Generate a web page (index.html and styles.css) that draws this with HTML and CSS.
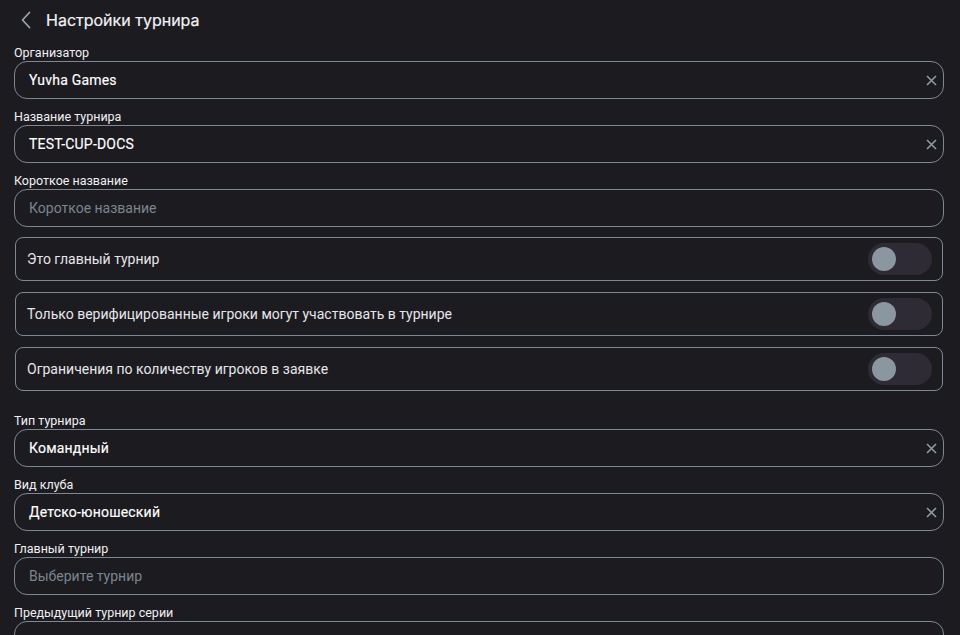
FILE: index.html
```html
<!DOCTYPE html>
<html lang="ru">
<head>
<meta charset="utf-8">
<link rel="stylesheet" href="styles.css">
</head>
<body>
<div class="page">
  <header class="header">
    <span class="back">
      <svg width="12" height="18" viewBox="0 0 12 18"><path d="M9.5 1.5 L2.5 9 L9.5 16.5" fill="none" stroke="#9aa3ab" stroke-width="1.8" stroke-linecap="round" stroke-linejoin="round"/></svg>
    </span>
    <h1 class="title">Настройки турнира</h1>
  </header>

  <div class="field">
    <label class="label">Организатор</label>
    <div class="input"><span class="value">Yuvha Games</span><span class="clear"><svg width="11" height="11" viewBox="0 0 11 11"><path d="M1 1 L10 10 M10 1 L1 10" stroke="#8e9aa4" stroke-width="1.6"/></svg></span></div>
  </div>
  <div class="field">
    <label class="label">Название турнира</label>
    <div class="input"><span class="value">TEST-CUP-DOCS</span><span class="clear"><svg width="11" height="11" viewBox="0 0 11 11"><path d="M1 1 L10 10 M10 1 L1 10" stroke="#8e9aa4" stroke-width="1.6"/></svg></span></div>
  </div>
  <div class="field">
    <label class="label">Короткое название</label>
    <div class="input"><span class="placeholder">Короткое название</span></div>
  </div>

  <div class="toggles">
    <div class="toggle-row"><span>Это главный турнир</span><span class="switch"><span class="knob"></span></span></div>
    <div class="toggle-row"><span>Только верифицированные игроки могут участвовать в турнире</span><span class="switch"><span class="knob"></span></span></div>
    <div class="toggle-row"><span>Ограничения по количеству игроков в заявке</span><span class="switch"><span class="knob"></span></span></div>
  </div>

  <div class="field">
    <label class="label">Тип турнира</label>
    <div class="input"><span class="value">Командный</span><span class="clear"><svg width="11" height="11" viewBox="0 0 11 11"><path d="M1 1 L10 10 M10 1 L1 10" stroke="#8e9aa4" stroke-width="1.6"/></svg></span></div>
  </div>
  <div class="field">
    <label class="label">Вид клуба</label>
    <div class="input"><span class="value">Детско-юношеский</span><span class="clear"><svg width="11" height="11" viewBox="0 0 11 11"><path d="M1 1 L10 10 M10 1 L1 10" stroke="#8e9aa4" stroke-width="1.6"/></svg></span></div>
  </div>
  <div class="field">
    <label class="label">Главный турнир</label>
    <div class="input"><span class="placeholder">Выберите турнир</span></div>
  </div>
  <div class="field">
    <label class="label">Предыдущий турнир серии</label>
    <div class="input"></div>
  </div>
</div>
</body>
</html>
```
FILE: styles.css
```css
html, body {
  margin: 0;
  padding: 0;
  background: #1c1c20;
  height: 100%;
  overflow: hidden;
}
body {
  font-family: Roboto, "Noto Sans", sans-serif;
  color: #ffffff;
}
.page {
  padding: 0 16px 0 14px;
}
.header {
  height: 40px;
  display: flex;
  align-items: center;
  gap: 14px;
  padding-left: 6px;
  margin-bottom: 5px;
}
.back {
  display: flex;
  width: 12px;
  height: 18px;
}
.title {
  margin: 0;
  font-family: Inter, Roboto, sans-serif;
  font-size: 16px;
  font-weight: 400;
  color: #f2f2f4;
  -webkit-text-stroke: 0.2px #f2f2f4;
}
.field {
  display: flex;
  flex-direction: column;
  margin-bottom: 10px;
}
.label {
  height: 16px;
  font-size: 12.5px;
  line-height: 16px;
  color: #f0f0f2;
}
.input {
  height: 38px;
  box-sizing: border-box;
  border: 1px solid #7c8893;
  border-radius: 13px;
  display: flex;
  align-items: center;
  padding: 0 6px 0 14px;
  font-size: 14px;
}
.value {
  flex: 1;
  font-weight: 400;
  color: #ffffff;
  -webkit-text-stroke: 0.15px #ffffff;
  letter-spacing: 0.2px;
}
.placeholder {
  flex: 1;
  color: #7b858f;
}
.clear {
  display: flex;
  width: 11px;
  height: 11px;
}
.toggles {
  display: flex;
  flex-direction: column;
  gap: 11px;
  margin-top: 1px;
  margin-bottom: 22px;
}
.toggle-row {
  height: 44px;
  box-sizing: border-box;
  border: 1px solid #7c8893;
  border-radius: 8px;
  display: flex;
  align-items: center;
  justify-content: space-between;
  padding: 0 10px 0 11px;
  font-size: 14px;
  color: #e6e6ea;
  margin: 0 1px;
}
.switch {
  width: 64px;
  height: 32px;
  border-radius: 16px;
  background: #2e2b35;
  display: flex;
  align-items: center;
  padding-left: 4px;
  box-sizing: border-box;
}
.knob {
  width: 24px;
  height: 24px;
  border-radius: 50%;
  background: #8a96a0;
}
```
